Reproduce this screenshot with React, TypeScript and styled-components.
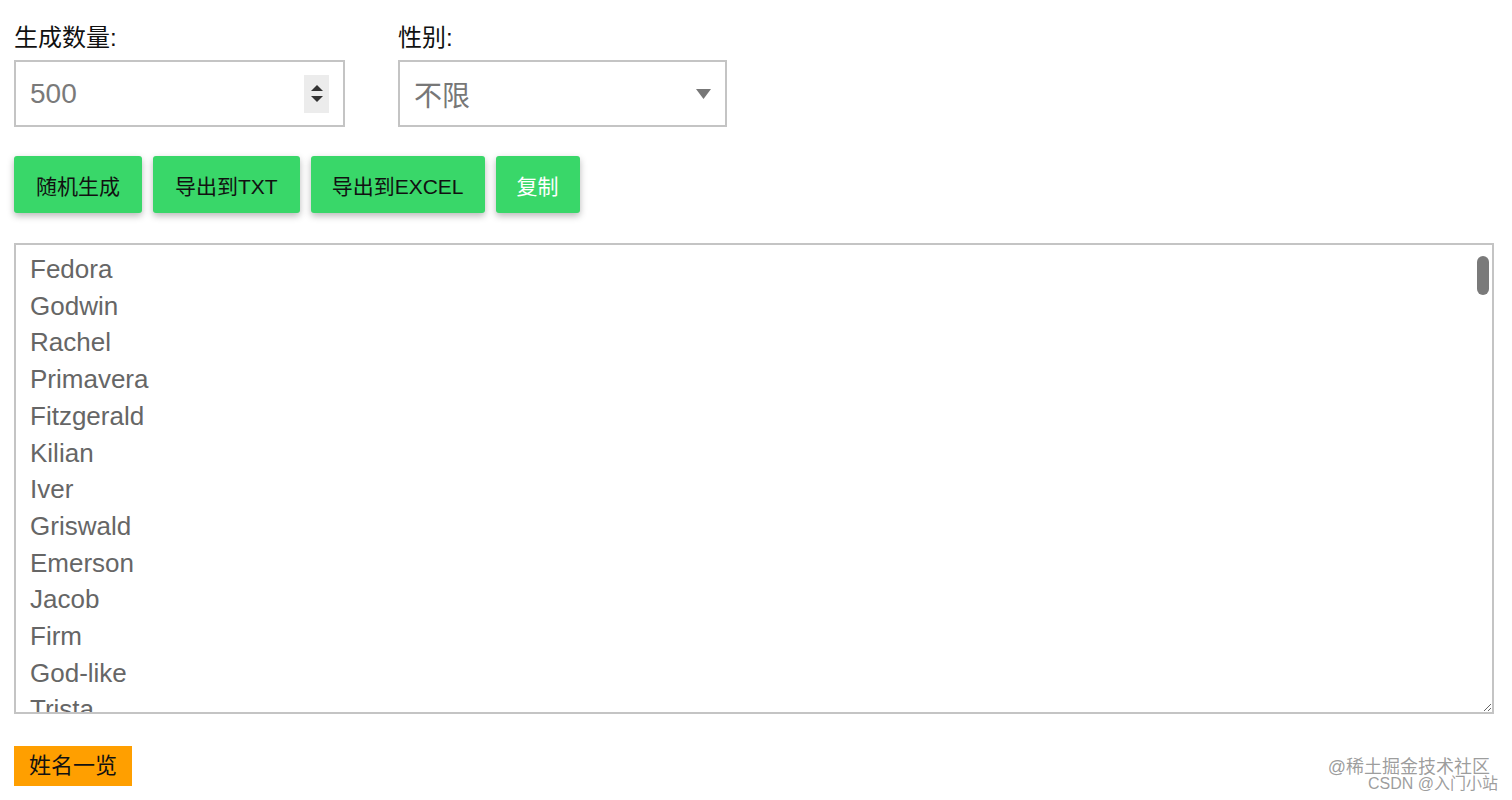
import React from "react";
import styled, { createGlobalStyle } from "styled-components";

const GlobalStyle = createGlobalStyle`
  html, body { margin: 0; padding: 0; background: #ffffff; }
  body { font-family: "Liberation Sans", "Noto Sans CJK SC", sans-serif; color: #111; }
  * { box-sizing: border-box; }
`;

const Page = styled.div`
  padding: 23px 18px 0 14px;
  display: flex;
  flex-direction: column;
  min-height: 800px;
  position: relative;
`;

const FieldRow = styled.div`
  display: flex;
  gap: 53px;
`;

const Field = styled.div<{ $w: number }>`
  display: flex;
  flex-direction: column;
  width: ${(p) => p.$w}px;
`;

const Label = styled.label`
  font-size: 24px;
  line-height: 30px;
  height: 30px;
  margin-bottom: 7px;
  color: #111;
`;

const Box = styled.div`
  height: 67px;
  border: 2px solid #c4c4c4;
  display: flex;
  align-items: center;
  justify-content: space-between;
  padding: 0 14px 0 14px;
  background: #fff;
`;

const NumberInput = styled.input`
  border: none;
  outline: none;
  font-family: "Liberation Sans", "Noto Sans CJK SC", sans-serif;
  font-size: 28px;
  color: #7a7a7a;
  width: 200px;
  padding: 0;
  background: transparent;
  appearance: textfield;
  &::-webkit-inner-spin-button,
  &::-webkit-outer-spin-button { -webkit-appearance: none; margin: 0; }
`;

const Spinner = styled.span`
  width: 25px;
  height: 38px;
  background: #ececec;
  display: flex;
  flex-direction: column;
  align-items: center;
  justify-content: center;
  gap: 5px;
`;

const SelectText = styled.span`
  font-size: 28px;
  color: #777;
`;

const ButtonRow = styled.div`
  display: flex;
  gap: 11px;
  margin-top: 29px;
`;

const GreenButton = styled.button<{ $light?: boolean; $pad?: number }>`
  height: 57px;
  padding: 0 ${(p) => p.$pad ?? 22}px;
  border: none;
  border-radius: 3px;
  background: #39d769;
  color: ${(p) => (p.$light ? "#ffffff" : "#111111")};
  font-family: "Liberation Sans", "Noto Sans CJK SC", sans-serif;
  font-size: 21px;
  box-shadow: 0 3px 7px rgba(0, 0, 0, 0.28);
  cursor: pointer;
`;

const AreaWrap = styled.div`
  position: relative;
  margin-top: 30px;
  display: flex;
`;

const NameArea = styled.textarea`
  width: 100%;
  height: 471px;
  border: 2px solid #c4c4c4;
  padding: 6px 14px;
  font-family: "Liberation Sans", "Noto Sans CJK SC", sans-serif;
  font-size: 26px;
  line-height: 36.7px;
  color: #666;
  resize: both;
  outline: none;
  overflow-y: scroll;
`;

const ScrollThumb = styled.span`
  position: absolute;
  top: 13px;
  right: 5px;
  width: 12px;
  height: 39px;
  border-radius: 6px;
  background: #7a7a7a;
  pointer-events: none;
`;

const Footer = styled.div`
  margin-top: 32px;
  display: flex;
`;

const Badge = styled.span`
  height: 40px;
  line-height: 40px;
  padding: 0 15px;
  background: #ff9f00;
  color: #111;
  font-size: 22px;
`;

const Watermark = styled.div`
  position: absolute;
  right: 12px;
  bottom: 8px;
  display: flex;
  flex-direction: column;
  align-items: flex-end;
  color: rgba(140, 140, 140, 0.85);
  pointer-events: none;
`;

const WaterLine = styled.span<{ $size: number; $shift: number }>`
  font-size: ${(p) => p.$size}px;
  line-height: ${(p) => p.$size}px;
  margin-right: ${(p) => p.$shift}px;
`;

const names = [
  "Fedora", "Godwin", "Rachel", "Primavera", "Fitzgerald", "Kilian", "Iver", "Griswald",
  "Emerson", "Jacob", "Firm", "God-like", "Trista", "Harley", "Ophelia", "Barnaby", "Celeste",
  "Dorian", "Evangeline", "Fabian", "Gwendolyn", "Hector", "Isadora", "Jasper", "Katrina",
  "Leander", "Marigold", "Nathaniel", "Octavia", "Percival", "Quintin", "Rosalind", "Sebastian",
  "Theodora", "Ulysses", "Valentina", "Winston", "Xavier", "Yolanda", "Zachary", "Adelaide",
  "Bertram", "Cordelia", "Desmond", "Eleanor", "Florian", "Genevieve", "Horace", "Imogen",
  "Julius", "Kendra", "Lucian", "Mirabel", "Norbert", "Odette", "Phineas", "Quincy", "Rowena",
  "Silas", "Tabitha", "Ursula", "Vernon", "Wilhelmina", "Yvette", "Zelda", "Ambrose", "Beatrix",
  "Cyril", "Delphine", "Edmund", "Felicity", "Gideon", "Harriet", "Ignatius", "Juniper",
  "Kingsley", "Lavinia", "Montague", "Nerissa", "Oswald", "Penelope", "Reginald", "Seraphina",
  "Thaddeus", "Verity", "Wilfred", "Alaric", "Briony", "Cassius", "Drusilla", "Ezekiel",
  "Fiona", "Gareth", "Hyacinth", "Isolde", "Jethro", "Kezia", "Lysander", "Maud", "Nigel",
  "Orla", "Piers", "Rupert", "Sabina", "Tristan", "Una", "Vivian", "Wendell", "Yorick", "Zinnia",
  "Alistair", "Bianca", "Clement", "Daphne", "Elias", "Freya", "Gilbert", "Hazel", "Ivo",
  "Jocelyn", "Kit", "Lionel", "Millicent", "Neville", "Olive", "Prudence", "Roland", "Sybil",
  "Tobias", "Ulrich", "Vesper", "Warren", "Agatha", "Basil", "Clara", "Duncan", "Esme", "Felix",
  "Greta", "Hugo", "Ida", "Jonah", "Lorna", "Magnus", "Nell", "Otto", "Petra", "Ralph", "Stella",
];

const SpinUp = () => (
  <svg width="12" height="6" viewBox="0 0 12 6">
    <path d="M6 0 L12 6 L0 6 Z" fill="#333" />
  </svg>
);

const SpinDown = () => (
  <svg width="12" height="6" viewBox="0 0 12 6">
    <path d="M0 0 L12 0 L6 6 Z" fill="#333" />
  </svg>
);

const Caret = () => (
  <svg width="15" height="10" viewBox="0 0 15 10">
    <path d="M0 0 L15 0 L7.5 10 Z" fill="#777" />
  </svg>
);

export default function App() {
  return (
    <>
      <GlobalStyle />
      <Page>
        <FieldRow>
          <Field $w={331}>
            <Label>生成数量:</Label>
            <Box>
              <NumberInput type="number" defaultValue={500} readOnly />
              <Spinner>
                <SpinUp />
                <SpinDown />
              </Spinner>
            </Box>
          </Field>
          <Field $w={329}>
            <Label>性别:</Label>
            <Box>
              <SelectText>不限</SelectText>
              <Caret />
            </Box>
          </Field>
        </FieldRow>
        <ButtonRow>
          <GreenButton>随机生成</GreenButton>
          <GreenButton>导出到TXT</GreenButton>
          <GreenButton $pad={21}>导出到EXCEL</GreenButton>
          <GreenButton $light $pad={21}>复制</GreenButton>
        </ButtonRow>
        <AreaWrap>
          <NameArea readOnly value={names.join("\n")} />
          <ScrollThumb />
        </AreaWrap>
        <Footer>
          <Badge>姓名一览</Badge>
        </Footer>
        <Watermark>
          <WaterLine $size={18} $shift={10}>@稀土掘金技术社区</WaterLine>
          <WaterLine $size={16} $shift={2}>CSDN @入门小站</WaterLine>
        </Watermark>
      </Page>
    </>
  );
}
